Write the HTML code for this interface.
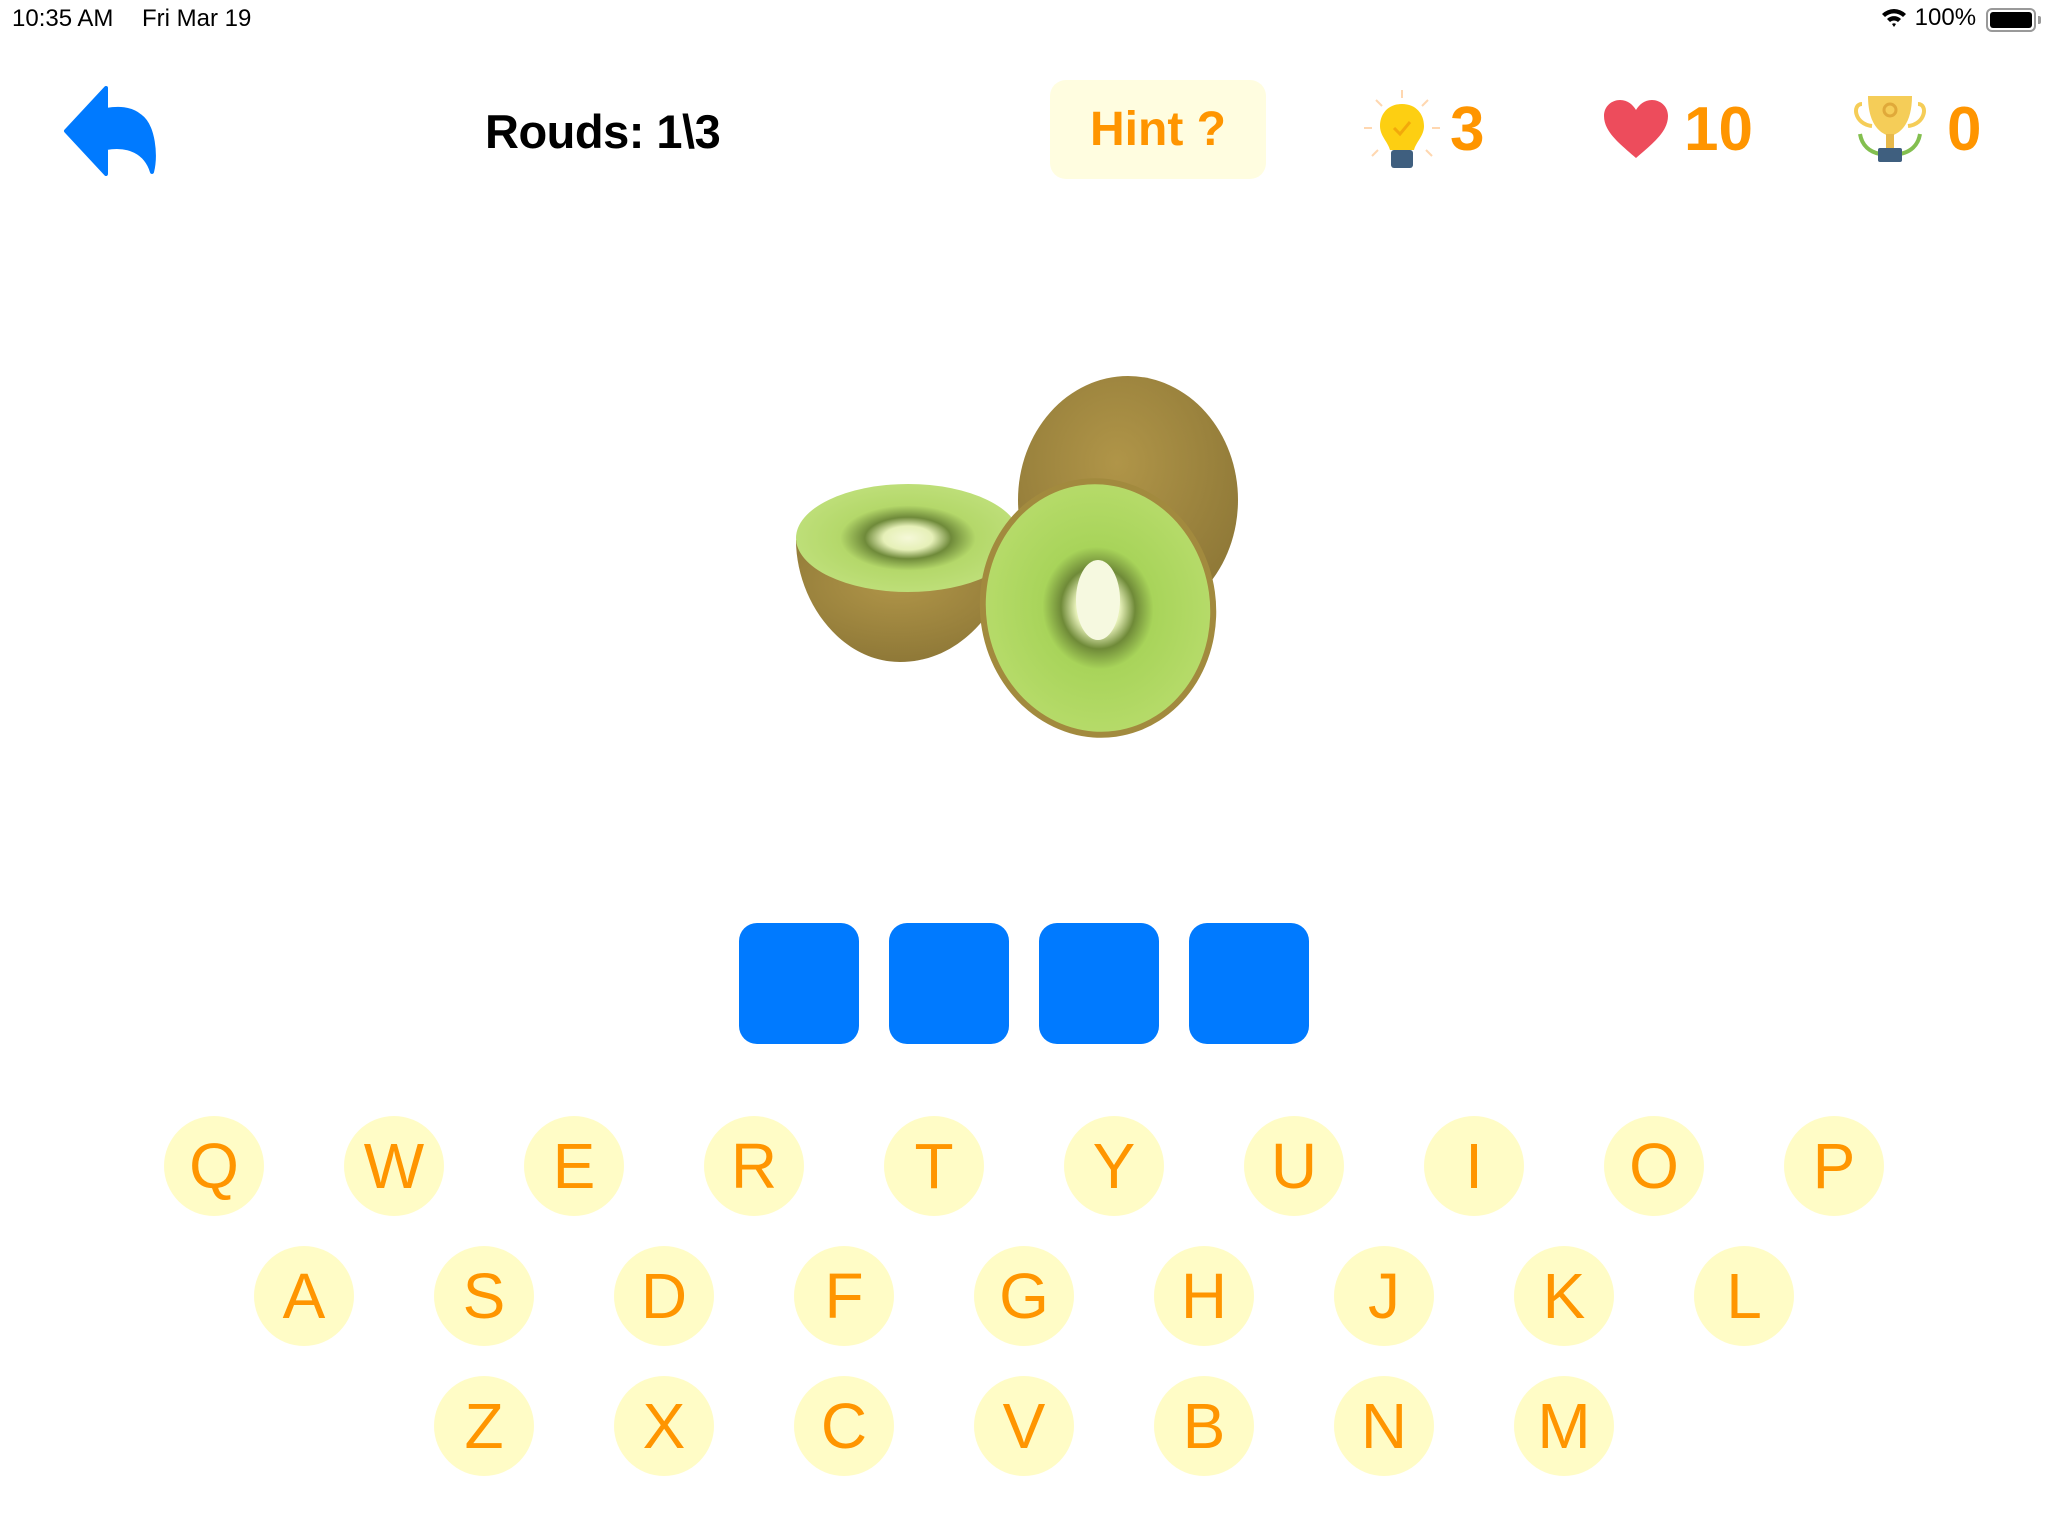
<!DOCTYPE html>
<html><head><meta charset="utf-8"><style>
*{margin:0;padding:0;box-sizing:border-box}
body{width:2048px;height:1536px;background:#fff;position:relative;overflow:hidden;font-family:"Liberation Sans",sans-serif}
.abs{position:absolute}
.sb{font-size:24px;color:#000;top:5px}
.key{position:absolute;width:100px;height:100px;border-radius:50%;background:#fffcc6;color:#ff9500;font-size:64px;text-align:center;line-height:100px}
.box{position:absolute;top:923px;width:120px;height:121px;border-radius:18px;background:#007aff}
.num{position:absolute;color:#ff9500;font-weight:bold;font-size:62px;top:94px;line-height:72px}
</style></head><body>
<div class="abs sb" style="left:12px">10:35 AM</div>
<div class="abs sb" style="left:142px">Fri Mar 19</div>
<div class="abs sb" style="left:1880px;top:4px">
<svg width="28" height="22" viewBox="0 0 28 22" style="vertical-align:-3px"><path d="M2 8 A17 17 0 0 1 26 8 L23 11 A13 13 0 0 0 5 11Z M7 13 A10 10 0 0 1 21 13 L18 16 A6 6 0 0 0 10 16Z M12 18 A3 3 0 0 1 16 18 L14 21Z" fill="#000"/></svg> 100%</div>
<div class="abs" style="left:1986px;top:8px;width:50px;height:24px;border:2px solid #999;border-radius:6px;padding:2px"><div style="background:#000;width:100%;height:100%;border-radius:3px"></div></div>
<div class="abs" style="left:2038px;top:16px;width:3px;height:8px;background:#999;border-radius:0 2px 2px 0"></div>

<svg class="abs" style="left:62px;top:86px" width="96" height="90" viewBox="0 0 96 90">
<path d="M44 2 L4 45 L44 88 L44 62 C66 58 84 66 90 86 C94 70 92 40 78 30 C68 22 56 22 44 24 Z" fill="#007aff" stroke="#007aff" stroke-width="4" stroke-linejoin="round"/>
</svg>

<div class="abs" style="left:485px;top:104px;font-size:47px;font-weight:bold;line-height:56px;letter-spacing:-0.5px">Rouds: 1\3</div>

<div class="abs" style="left:1050px;top:80px;width:216px;height:99px;border-radius:16px;background:#fffde0;color:#ff9500;font-weight:bold;font-size:48px;text-align:center;line-height:99px">Hint ?</div>

<svg class="abs" style="left:1362px;top:88px" width="80" height="86" viewBox="0 0 80 86">
<g stroke="#ffd7b0" stroke-width="2"><line x1="40" y1="2" x2="40" y2="10"/><line x1="14" y1="12" x2="20" y2="18"/><line x1="66" y1="12" x2="60" y2="18"/><line x1="2" y1="40" x2="10" y2="40"/><line x1="70" y1="40" x2="78" y2="40"/><line x1="10" y1="68" x2="16" y2="62"/><line x1="70" y1="68" x2="64" y2="62"/></g>
<path d="M40 16 C26 16 18 26 18 38 C18 48 26 54 28 62 L52 62 C54 54 62 48 62 38 C62 26 54 16 40 16Z" fill="#fdcf12"/>
<path d="M32 40 L38 46 L48 34" fill="none" stroke="#f2a90b" stroke-width="3"/>
<rect x="29" y="62" width="22" height="18" rx="3" fill="#3f5f7f"/>
</svg>
<div class="num" style="left:1450px">3</div>

<svg class="abs" style="left:1602px;top:98px" width="68" height="62" viewBox="0 0 68 62">
<path d="M34 60 C18 46 2 34 2 18 C2 8 10 2 18 2 C26 2 31 7 34 12 C37 7 42 2 50 2 C58 2 66 8 66 18 C66 34 50 46 34 60Z" fill="#ed4c5c"/>
</svg>
<div class="num" style="left:1684px">10</div>

<svg class="abs" style="left:1850px;top:94px" width="80" height="72" viewBox="0 0 80 72">
<path d="M10 40 C12 52 20 58 30 60 M70 40 C68 52 60 58 50 60" fill="none" stroke="#83bf4f" stroke-width="4"/>
<path d="M12 10 C2 10 4 30 22 32 M68 10 C78 10 76 30 58 32" fill="none" stroke="#f5cd58" stroke-width="4"/>
<path d="M18 2 L62 2 C62 30 50 40 40 42 C30 40 18 30 18 2Z" fill="#f5cd58"/>
<circle cx="40" cy="16" r="6" fill="none" stroke="#e0a93a" stroke-width="3"/>
<rect x="36" y="40" width="8" height="14" fill="#e8b94a"/>
<rect x="28" y="54" width="24" height="14" rx="2" fill="#3f5f7f"/>
</svg>
<div class="num" style="left:1947px">0</div>

<!-- kiwi -->
<svg class="abs" style="left:780px;top:340px" width="480" height="420" viewBox="780 340 480 420">
<defs>
<radialGradient id="skin" cx="45%" cy="35%" r="70%"><stop offset="0" stop-color="#b09548"/><stop offset="1" stop-color="#8c7636"/></radialGradient>
<radialGradient id="flesh" cx="50%" cy="50%" r="55%"><stop offset="0" stop-color="#f5f8d8"/><stop offset="0.18" stop-color="#e6f0b8"/><stop offset="0.3" stop-color="#6f8a38"/><stop offset="0.45" stop-color="#a8d45a"/><stop offset="1" stop-color="#b8dc6c"/></radialGradient>
<radialGradient id="flesh2" cx="50%" cy="50%" r="55%"><stop offset="0" stop-color="#f5f8d8"/><stop offset="0.2" stop-color="#e6f0b8"/><stop offset="0.35" stop-color="#6f8a3a"/><stop offset="0.55" stop-color="#b4d86a"/><stop offset="1" stop-color="#c0e07c"/></radialGradient>
</defs>
<ellipse cx="1128" cy="500" rx="110" ry="124" fill="url(#skin)"/>
<path d="M796 540 C796 600 840 662 900 662 C960 662 1005 610 1020 540 Z" fill="url(#skin)"/>
<ellipse cx="908" cy="538" rx="112" ry="54" fill="url(#flesh2)"/>
<ellipse cx="1098" cy="608" rx="118" ry="130" transform="rotate(-8 1098 608)" fill="#a28a3e"/>
<ellipse cx="1098" cy="608" rx="112" ry="124" transform="rotate(-8 1098 608)" fill="url(#flesh)"/>
<ellipse cx="1098" cy="600" rx="22" ry="40" fill="#f6f9e0"/>
</svg>

<div class="box" style="left:739px"></div>
<div class="box" style="left:889px"></div>
<div class="box" style="left:1039px"></div>
<div class="box" style="left:1189px"></div>

<div class="key" style="left:164px;top:1116px">Q</div>
<div class="key" style="left:344px;top:1116px">W</div>
<div class="key" style="left:524px;top:1116px">E</div>
<div class="key" style="left:704px;top:1116px">R</div>
<div class="key" style="left:884px;top:1116px">T</div>
<div class="key" style="left:1064px;top:1116px">Y</div>
<div class="key" style="left:1244px;top:1116px">U</div>
<div class="key" style="left:1424px;top:1116px">I</div>
<div class="key" style="left:1604px;top:1116px">O</div>
<div class="key" style="left:1784px;top:1116px">P</div>

<div class="key" style="left:254px;top:1246px">A</div>
<div class="key" style="left:434px;top:1246px">S</div>
<div class="key" style="left:614px;top:1246px">D</div>
<div class="key" style="left:794px;top:1246px">F</div>
<div class="key" style="left:974px;top:1246px">G</div>
<div class="key" style="left:1154px;top:1246px">H</div>
<div class="key" style="left:1334px;top:1246px">J</div>
<div class="key" style="left:1514px;top:1246px">K</div>
<div class="key" style="left:1694px;top:1246px">L</div>

<div class="key" style="left:434px;top:1376px">Z</div>
<div class="key" style="left:614px;top:1376px">X</div>
<div class="key" style="left:794px;top:1376px">C</div>
<div class="key" style="left:974px;top:1376px">V</div>
<div class="key" style="left:1154px;top:1376px">B</div>
<div class="key" style="left:1334px;top:1376px">N</div>
<div class="key" style="left:1514px;top:1376px">M</div>
</body></html>
